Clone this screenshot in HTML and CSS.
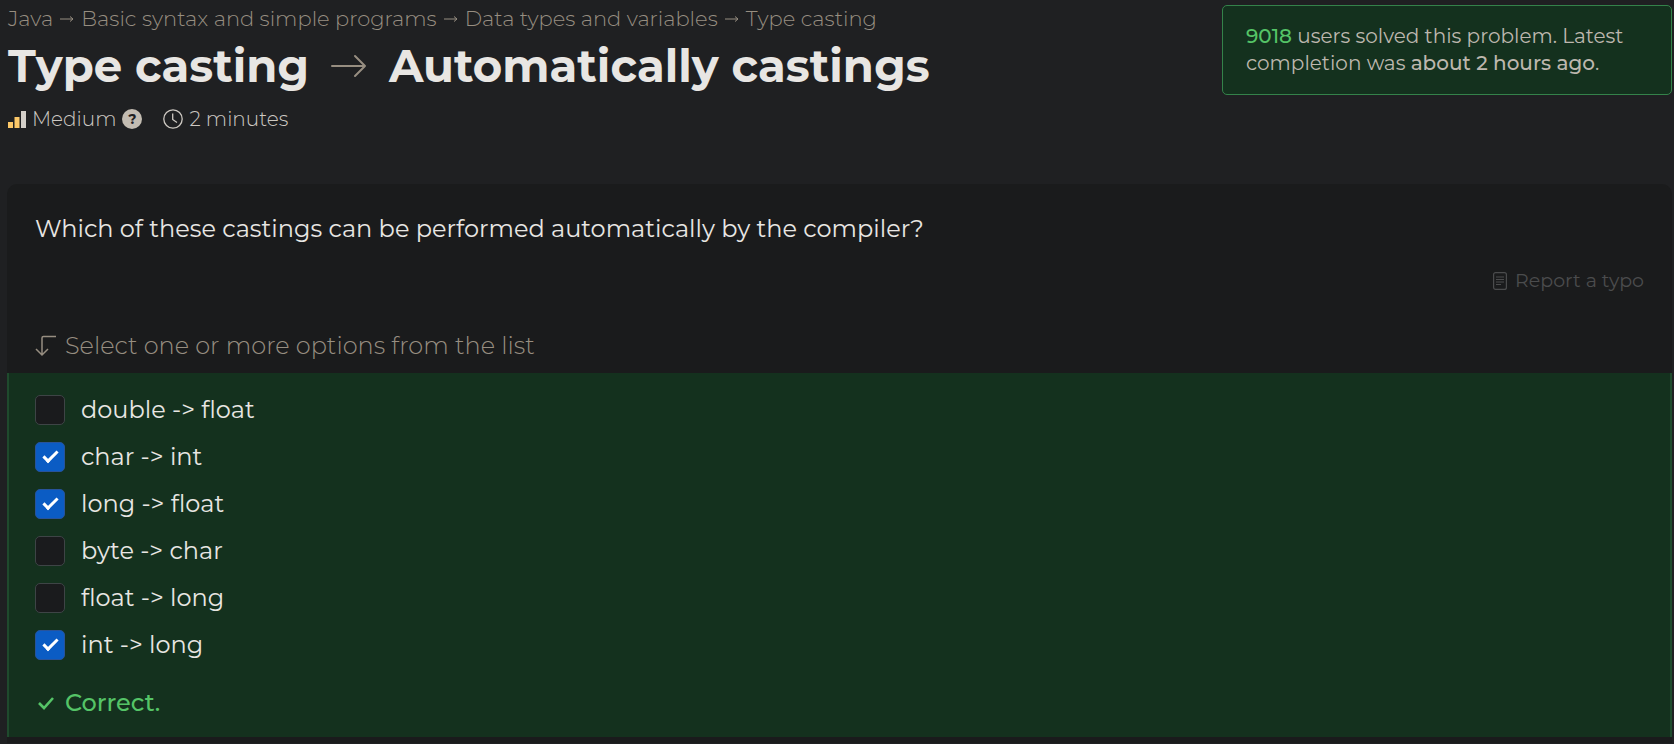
FILE: index.html
```html
<!DOCTYPE html>
<html lang="en">
<head>
<meta charset="utf-8">
<meta name="viewport" content="width=device-width, initial-scale=1">
<title>Type casting → Automatically castings</title>
<link rel="stylesheet" href="styles.css">
</head>
<body>
<main class="page">
  <header class="header">
    <div class="intro">
      <nav class="crumbs" aria-label="Breadcrumb">
        <a href="#">Java</a>
        <svg class="crumb-arrow" viewBox="0 0 14 8" aria-hidden="true"><path d="M0 4h13M10 1.500 13 4l-3 2.500"/></svg>
        <a href="#">Basic syntax and simple programs</a>
        <svg class="crumb-arrow" viewBox="0 0 14 8" aria-hidden="true"><path d="M0 4h13M10 1.500 13 4l-3 2.500"/></svg>
        <a href="#">Data types and variables</a>
        <svg class="crumb-arrow" viewBox="0 0 14 8" aria-hidden="true"><path d="M0 4h13M10 1.500 13 4l-3 2.500"/></svg>
        <a href="#">Type casting</a>
      </nav>
      <h1 class="title">
        <span>Type casting</span>
        <svg class="title-arrow" viewBox="0 0 36 24" aria-hidden="true"><path d="M1 12h33M24 2l10 10-10 10"/></svg>
        <span>Automatically castings</span>
      </h1>
      <div class="meta">
        <span class="level">
          <svg class="bars" viewBox="0 0 18 17" aria-hidden="true"><path class="bar-on" d="M0 11h5v6H0zM6.500 6h5v11h-5z"/><path class="bar-off" d="M13 0h5v17h-5z"/></svg>
          <span>Medium</span>
          <button class="help" type="button" aria-label="About difficulty">?</button>
        </span>
        <span class="time">
          <svg class="clock" viewBox="0 0 20 20" aria-hidden="true"><circle cx="10" cy="10" r="9.200"/><path d="M9.700 4.500v6l4.300 3"/></svg>
          <span>2 minutes</span>
        </span>
      </div>
    </div>
    <aside class="stats"><span class="count">9018</span> users solved this problem. Latest completion was <strong>about 2 hours ago</strong>.</aside>
  </header>

  <section class="card">
    <div class="task">
      <p class="question">Which of these castings can be performed automatically by the compiler?</p>
      <button class="report" type="button">
        <svg class="doc" viewBox="0 0 14 18" aria-hidden="true"><rect x=".600" y=".600" width="12.800" height="16.800" rx="2"/><path d="M3 5h8M3 7.500h8M3 10h8M3 12.500h5"/></svg>
        <span>Report a typo</span>
      </button>
      <p class="hint">
        <svg class="turn" viewBox="0 0 22 22" aria-hidden="true"><path d="M21 1.500H8.500Q7 1.500 7 3v17M1 14l6 6 6-6"/></svg>
        <span>Select one or more options from the list</span>
      </p>
    </div>
    <form class="answer">
      <label class="option"><input type="checkbox"><span>double -&gt; float</span></label>
      <label class="option"><input type="checkbox" checked><span>char -&gt; int</span></label>
      <label class="option"><input type="checkbox" checked><span>long -&gt; float</span></label>
      <label class="option"><input type="checkbox"><span>byte -&gt; char</span></label>
      <label class="option"><input type="checkbox"><span>float -&gt; long</span></label>
      <label class="option"><input type="checkbox" checked><span>int -&gt; long</span></label>
      <p class="result">
        <svg class="tick" viewBox="0 0 18 14" aria-hidden="true"><path d="m2 7 5 5 9-10"/></svg>
        <span>Correct.</span>
      </p>
    </form>
  </section>
</main>
</body>
</html>
```

FILE: styles.css
```css
*,
*::before {
  box-sizing: border-box;
}

body {
  margin: 0;
  background: #1f2022;
  color: #e8e6e3;
  font-family: Gotham, Montserrat, Inter, "Open Sans", sans-serif;
  font-size: 24px;
  line-height: 30px;
}

p,
h1 {
  margin: 0;
}

button {
  border: 0;
  padding: 0;
  background: none;
  color: inherit;
  font: inherit;
  cursor: pointer;
}

svg {
  flex: none;
  fill: none;
  stroke: currentColor;
}

.page {
  padding: 5px 2px 0 7px;
}

.header {
  display: flex;
  justify-content: space-between;
  align-items: flex-start;
  min-height: 179px;
}

.intro {
  padding-left: 1px;
}

.crumbs {
  display: flex;
  align-items: center;
  gap: 7px;
  color: #978e81;
  font-size: 21px;
  font-weight: 300;
  line-height: 28px;
}

.crumbs a {
  color: inherit;
  text-decoration: none;
}

.crumb-arrow {
  width: 14px;
  height: 8px;
}

.title {
  display: flex;
  align-items: center;
  gap: 22px;
  margin-top: 4px;
  font-size: 45px;
  font-weight: 700;
  line-height: 58px;
}

.title-arrow {
  width: 36px;
  height: 24px;
  color: #978e81;
  stroke-width: 2;
  stroke-linecap: round;
  stroke-linejoin: round;
}

.meta {
  display: flex;
  gap: 21px;
  margin-top: 10px;
  color: #cdc8c2;
  font-size: 20px;
  font-weight: 300;
  line-height: 28px;
}

.level,
.time {
  display: flex;
  align-items: center;
  gap: 6px;
}

.bars {
  width: 18px;
  height: 17px;
  stroke: none;
}

.bar-on {
  fill: #fcc868;
}

.bar-off {
  fill: #d3cfc9;
}

.help {
  width: 20px;
  height: 20px;
  border-radius: 50%;
  background: #c3bcb2;
  color: #1f2022;
  font-size: 14px;
  font-weight: 700;
  line-height: 20px;
}

.clock {
  width: 20px;
  height: 20px;
  stroke-width: 1.3;
}

.stats {
  width: 450px;
  padding: 17px 23px;
  border: 1px solid #34824a;
  border-radius: 5px;
  background: #14311e;
  color: #bdb7ae;
  font-size: 20px;
  line-height: 27px;
}

.count {
  color: #55c467;
  font-weight: 500;
}

.stats strong {
  font-weight: 500;
}

.card {
  border-radius: 10px 10px 0 0;
  background: #1a1b1c;
  padding-bottom: 6px;
}

.task {
  display: flex;
  flex-direction: column;
  padding: 30px 28px 12px;
}

.report {
  display: flex;
  align-self: flex-end;
  align-items: center;
  gap: 8px;
  margin-top: 22px;
  color: #4b4c4d;
  font-size: 19px;
}

.doc {
  width: 14px;
  height: 18px;
  stroke-width: 1.2;
}

.hint {
  display: flex;
  align-items: center;
  gap: 8px;
  margin-top: 35px;
  color: #978e81;
  font-weight: 300;
}

.turn {
  width: 22px;
  height: 22px;
  stroke-width: 1.5;
}

.answer {
  display: flex;
  flex-direction: column;
  gap: 17px;
  padding: 22px 26px 19px;
  border: solid #1f4a2d;
  border-width: 0 2px;
  background: #14311e;
}

.option {
  display: flex;
  align-items: center;
  align-self: flex-start;
  gap: 16px;
}

.option input {
  appearance: none;
  display: grid;
  place-items: center;
  width: 30px;
  height: 30px;
  margin: 0;
  border: 1px solid #3e4446;
  border-radius: 5px;
  background: #1a1b1d;
}

.option input:checked {
  border-color: #28539a;
  background: #0b5cc4;
}

.option input:checked::before {
  content: "";
  width: 15px;
  height: 8px;
  margin-bottom: 4px;
  border: solid #fff;
  border-width: 0 0 3px 3px;
  transform: rotate(-45deg);
}

.result {
  display: flex;
  align-items: center;
  gap: 10px;
  margin-top: 11px;
  padding-left: 2px;
  color: #55c467;
  font-weight: 500;
}

.tick {
  width: 18px;
  height: 14px;
  stroke-width: 2.6;
}
```
